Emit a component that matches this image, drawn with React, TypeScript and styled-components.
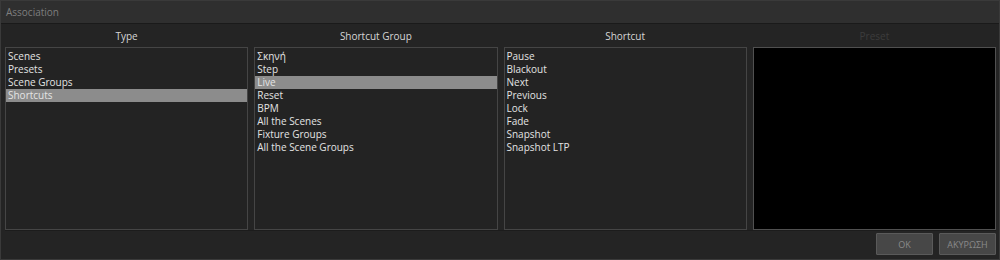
import styled, { createGlobalStyle } from 'styled-components'

const columns = [
  { id: 'type', title: 'Type', items: ['Scenes', 'Presets', 'Scene Groups', 'Shortcuts'], selected: 3 },
  {
    id: 'group',
    title: 'Shortcut Group',
    items: ['Σκηνή', 'Step', 'Live', 'Reset', 'BPM', 'All the Scenes', 'Fixture Groups', 'All the Scene Groups'],
    selected: 2,
  },
  {
    id: 'shortcut',
    title: 'Shortcut',
    items: ['Pause', 'Blackout', 'Next', 'Previous', 'Lock', 'Fade', 'Snapshot', 'Snapshot LTP'],
    selected: -1,
  },
]

const GlobalStyle = createGlobalStyle`
  html, body {
    margin: 0;
    padding: 0;
    background: #1c1c1c;
  }
  body {
    font-family: 'Open Sans', 'Noto Sans', sans-serif;
  }
`

const Window = styled.div`
  width: 1000px;
  height: 260px;
  box-sizing: border-box;
  border: 1px solid #3a3a3a;
  background: #242424;
  display: flex;
  flex-direction: column;
`

const TitleBar = styled.div`
  height: 22px;
  background: #2f2f2f;
  border-bottom: 1px solid #1a1a1a;
  color: #7e7e7e;
  font-size: 10px;
  line-height: 22px;
  padding-left: 5px;
`

const Body = styled.div`
  flex: 1;
  display: flex;
  flex-direction: column;
  padding: 0 3px 0 4px;
`

const Columns = styled.div`
  display: grid;
  grid-template-columns: repeat(4, 1fr);
  column-gap: 6px;
`

const Column = styled.div`
  display: flex;
  flex-direction: column;
`

const Header = styled.div<{ $dim?: boolean }>`
  height: 23px;
  line-height: 25px;
  text-align: center;
  font-size: 10px;
  color: ${(p) => (p.$dim ? '#3c3c3c' : '#d6d6d6')};
`

const ListBox = styled.div<{ $black?: boolean }>`
  height: 183px;
  box-sizing: border-box;
  border: 1px solid ${(p) => (p.$black ? '#505050' : '#454545')};
  background: ${(p) => (p.$black ? '#000' : '#232323')};
  padding-top: 2px;
`

const Row = styled.div<{ $selected?: boolean }>`
  height: 13px;
  line-height: 13px;
  font-size: 10px;
  padding-left: 2px;
  color: #e4e4e4;
  background: ${(p) => (p.$selected ? '#8c8c8c' : 'transparent')};
  white-space: nowrap;
`

const Footer = styled.div`
  display: flex;
  justify-content: flex-end;
  gap: 6px;
  padding-top: 2px;
  border-top: 1px solid #1c1c1c;
`

const Button = styled.button`
  width: 57px;
  height: 22px;
  box-sizing: border-box;
  background: #474747;
  border: 1px solid #5a5a5a;
  border-radius: 1px;
  color: #8a8a8a;
  font-family: 'Open Sans', 'Noto Sans', sans-serif;
  font-size: 9px;
  padding: 0;
`

export default function App() {
  return (
    <>
      <GlobalStyle />
      <Window>
        <TitleBar>Association</TitleBar>
        <Body>
          <Columns>
            {columns.map((col) => (
              <Column key={col.id}>
                <Header>{col.title}</Header>
                <ListBox>
                  {col.items.map((item, i) => (
                    <Row key={item} $selected={i === col.selected}>
                      {item}
                    </Row>
                  ))}
                </ListBox>
              </Column>
            ))}
            <Column>
              <Header $dim>Preset</Header>
              <ListBox $black />
            </Column>
          </Columns>
          <Footer>
            <Button>OK</Button>
            <Button>ΑΚΥΡΩΣΗ</Button>
          </Footer>
        </Body>
      </Window>
    </>
  )
}
